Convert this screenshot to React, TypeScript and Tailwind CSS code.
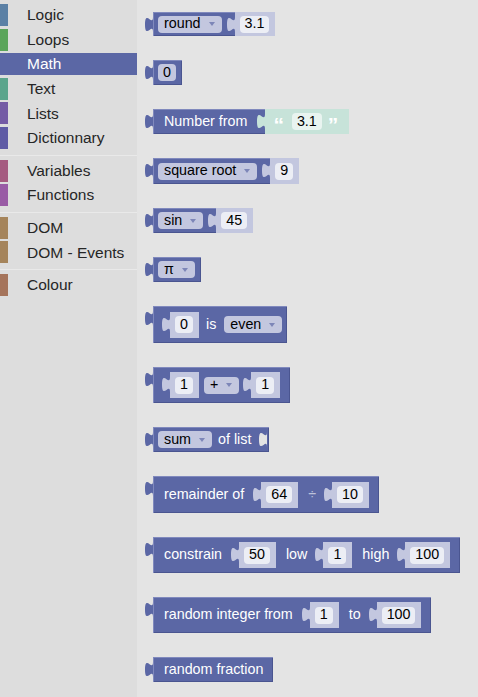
import type { ReactNode } from 'react'

const DARK = '#5b67a5'
const LIGHT = '#c3c7df'
const FIELD = '#eceef5'
const FLYOUT_BG = '#e4e4e4'

const CATEGORIES: ({ name: string; color: string; selected?: boolean } | 'sep')[] = [
  { name: 'Logic', color: '#5b80a5' },
  { name: 'Loops', color: '#5ba55b' },
  { name: 'Math', color: '#5b67a5', selected: true },
  { name: 'Text', color: '#5ba58c' },
  { name: 'Lists', color: '#745ba5' },
  { name: 'Dictionnary', color: '#5f5ba5' },
  'sep',
  { name: 'Variables', color: '#a55b80' },
  { name: 'Functions', color: '#995ba5' },
  'sep',
  { name: 'DOM', color: '#a5845b' },
  { name: 'DOM - Events', color: '#a5845b' },
  'sep',
  { name: 'Colour', color: '#a5745b' },
]

// Blockly puzzle tab (output connector)
function Tab({ fill, className = '' }: { fill: string; className?: string }) {
  return (
    <svg width="8" height="15" viewBox="0 0 8 15" className={`shrink-0 overflow-visible ${className}`}>
      <path d="M8 0 c0 10 -8 -8 -8 7.5 s8 -2.5 8 7.5 Z" fill={fill} />
    </svg>
  )
}

function Arrow() {
  return (
    <svg width="6" height="4" viewBox="0 0 6 4" className="ml-[8px] shrink-0">
      <path d="M0 0 H6 L3 4 Z" fill="#7d86b8" />
    </svg>
  )
}

function Dropdown({ label, className = '' }: { label: string; className?: string }) {
  return (
    <span className={`flex h-[17px] items-center rounded-[4px] bg-[#c3c7df] pl-[6px] pr-[7px] text-black ${className}`}>
      {label}
      <Arrow />
    </span>
  )
}

function Field({ value, bg = FIELD }: { value: string; bg?: string }) {
  return (
    <span className="flex h-[17px] items-center rounded-[4px] px-[5px] text-black" style={{ background: bg }}>
      {value}
    </span>
  )
}

// shadow block plugged in as an input (its tab bites into the parent)
function Slot({ value, className = '', full = false }: { value: string; className?: string; full?: boolean }) {
  return (
    <div className={`flex items-start ${full ? 'self-stretch' : 'h-[26px]'} ${className}`}>
      <Tab fill={LIGHT} className="mt-[5px]" />
      <div className="flex h-full items-center bg-[#c3c7df] pl-[5px] pr-[6px]">
        <Field value={value} />
      </div>
    </div>
  )
}

function Block({ h, children, className = '' }: { h: number; children: ReactNode; className?: string }) {
  return (
    <div className="flex items-start">
      <Tab fill={DARK} className="mt-[5px]" />
      <div
        className={`flex items-center bg-[#5b67a5] text-white shadow-[inset_1px_1px_0_#8089bd,inset_-1px_-1px_0_#4a5590] ${className}`}
        style={{ height: h }}
      >
        {children}
      </div>
    </div>
  )
}

function Sidebar() {
  return (
    <div className="flex w-[137px] shrink-0 flex-col bg-[#dddddd] pt-[4px] text-[15.5px] text-[#262626]">
      {CATEGORIES.map((c, i) =>
        c === 'sep' ? (
          <div key={i} className="flex h-[8px] items-center">
            <div className="h-px w-full bg-[#e9e9e9]" />
          </div>
        ) : (
          <div
            key={c.name}
            className={`mb-[2.6px] flex h-[22px] items-center ${c.selected ? 'bg-[#5b67a5] text-white' : ''}`}
          >
            <span className="h-full w-[8px] shrink-0" style={{ background: c.color }} />
            <span className="pl-[19px] leading-none">{c.name}</span>
          </div>
        ),
      )}
    </div>
  )
}

export default function App() {
  return (
    <div
      className="flex h-screen w-full overflow-hidden"
      style={{ fontFamily: '"Liberation Sans", Arial, sans-serif' }}
    >
      <Sidebar />

      <div className="flex flex-1 flex-col items-start gap-[24px] bg-[#e4e4e4] pl-[8px] pt-[12px] text-[14.3px]">
        {/* round */}
        <Block h={24} className="pl-[5px]">
          <Dropdown label="round" />
          <Slot value="3.1" full className="ml-[5px]" />
        </Block>

        {/* number */}
        <Block h={25} className="pl-[5px] pr-[6px]">
          <Field value="0" bg={LIGHT} />
        </Block>

        {/* number from text */}
        <Block h={25} className="pl-[11px]">
          <span>Number from</span>
          <div className="ml-[10px] flex items-start self-stretch">
            <Tab fill="#c7e3d9" className="mt-[5px]" />
            <div className="flex h-full items-center bg-[#c7e3d9] pl-[8px] pr-[11px]">
              <span className="mt-[4px] h-[20px] text-[21px] font-bold leading-none text-white">“</span>
              <span className="ml-[8px]">
                <Field value="3.1" bg="#e9f4f0" />
              </span>
              <span className="ml-[6px] mt-[4px] h-[20px] text-[21px] font-bold leading-none text-white">”</span>
            </div>
          </div>
        </Block>

        {/* square root */}
        <Block h={26} className="pl-[5px]">
          <Dropdown label="square root" />
          <Slot value="9" full className="ml-[5px]" />
        </Block>

        {/* sin */}
        <Block h={25} className="pl-[5px]">
          <Dropdown label="sin" />
          <Slot value="45" full className="ml-[5px]" />
        </Block>

        {/* pi */}
        <Block h={25} className="pl-[5px] pr-[6px]">
          <Dropdown label="π" />
        </Block>

        {/* is even */}
        <Block h={37} className="pl-[9px] pr-[5px]">
          <Slot value="0" />
          <span className="ml-[7px]">is</span>
          <Dropdown label="even" className="ml-[8px]" />
        </Block>

        {/* arithmetic */}
        <Block h={36} className="pl-[9px] pr-[10px]">
          <Slot value="1" />
          <Dropdown label="+" className="ml-[5px]" />
          <Slot value="1" className="ml-[4px]" />
        </Block>

        {/* sum of list */}
        <Block h={25} className="pl-[5px] pr-[2px]">
          <Dropdown label="sum" />
          <span className="ml-[6px]">of list</span>
          <Tab fill={FLYOUT_BG} className="ml-[8px] mt-[5px] self-start" />
        </Block>

        {/* remainder */}
        <Block h={37} className="pl-[11px] pr-[10px]">
          <span>remainder of</span>
          <Slot value="64" className="ml-[9px]" />
          <span className="ml-[10px] text-white/60">÷</span>
          <Slot value="10" className="ml-[8px]" />
        </Block>

        {/* constrain */}
        <Block h={36} className="pl-[11px] pr-[10px]">
          <span>constrain</span>
          <Slot value="50" className="ml-[9px]" />
          <span className="ml-[10px]">low</span>
          <Slot value="1" className="ml-[8px]" />
          <span className="ml-[10px]">high</span>
          <Slot value="100" className="ml-[8px]" />
        </Block>

        {/* random integer */}
        <Block h={36} className="pl-[11px] pr-[10px]">
          <span>random integer from</span>
          <Slot value="1" className="ml-[9px]" />
          <span className="ml-[10px]">to</span>
          <Slot value="100" className="ml-[8px]" />
        </Block>

        {/* random fraction */}
        <Block h={25} className="pl-[11px] pr-[10px]">
          <span>random fraction</span>
        </Block>
      </div>
    </div>
  )
}
